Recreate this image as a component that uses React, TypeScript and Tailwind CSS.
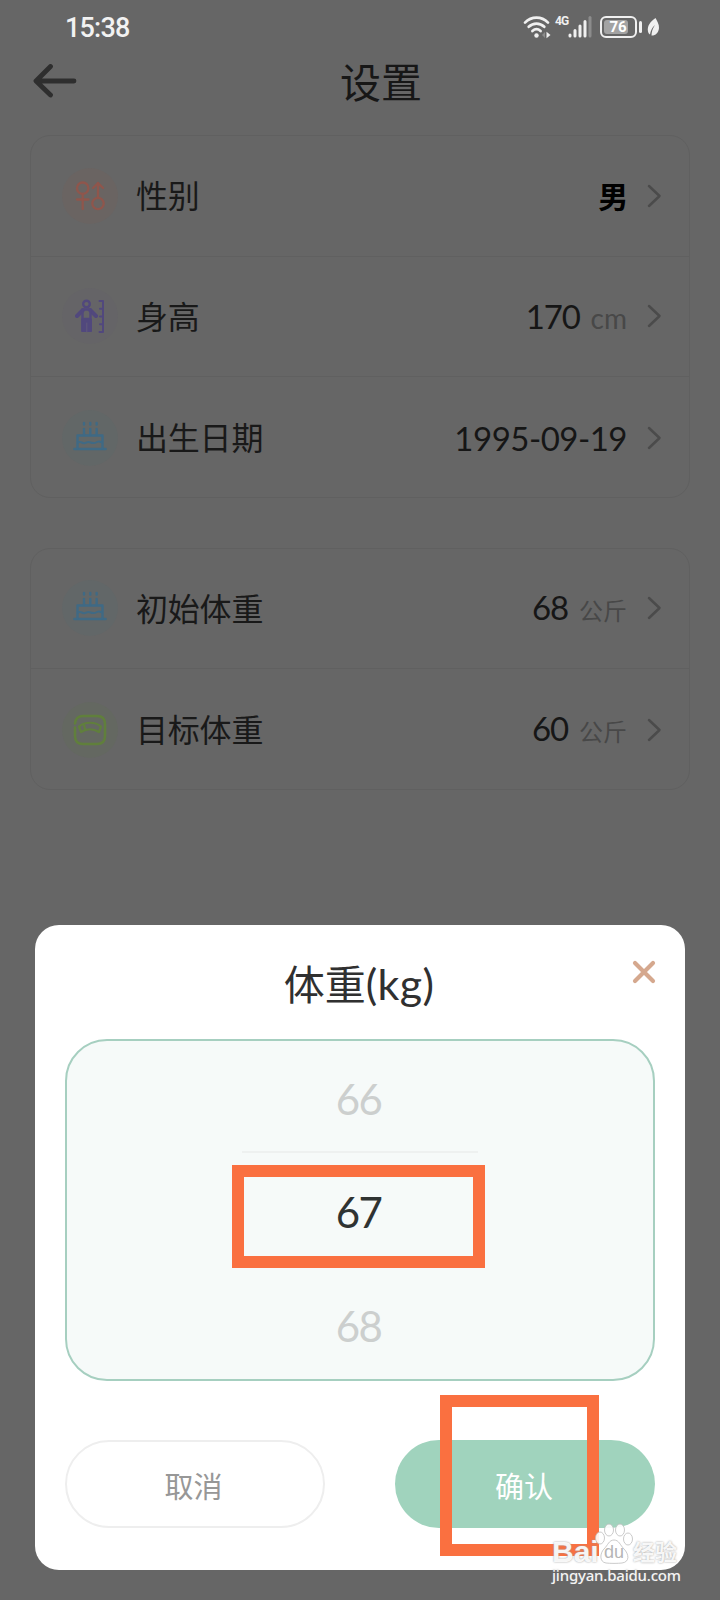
import { ReactNode } from "react";

interface RowProps {
    icon: ReactNode;
    tint: string;
    label: string;
    children: ReactNode;
}

function WifiIcon() {
    return (
        <svg width="28" height="24" viewBox="0 0 28 24" fill="none" stroke="#f0f0f0" strokeWidth="2.7" strokeLinecap="round">
            <path d="M2 7.6C8.5 1 18.5 1 25 7.6" />
            <path d="M5.7 11.8C10.2 7.5 16.8 7.5 21.3 11.8" />
            <path d="M9.4 16C11.9 13.8 15.1 13.8 17.6 16" />
            <circle cx="13.5" cy="20.5" r="2.2" fill="#f0f0f0" stroke="none" />
            <path d="M22 17v6l-3-3z" fill="#8c8c8c" stroke="none" />
            <path d="M23.5 16.8v6.4l4-3.2z" fill="#f0f0f0" stroke="none" />
        </svg>
    );
}

function SignalIcon() {
    return (
        <svg width="24" height="24" viewBox="0 0 24 24" fill="none" stroke="#f0f0f0" strokeWidth="3" strokeLinecap="round">
            <path d="M2 20v1M7 15.5V21M12 11v10M17 6.5V21" />
            <path d="M22 2.5V21" stroke="#8c8c8c" />
        </svg>
    );
}

function LeafIcon() {
    return (
        <svg width="13" height="20" viewBox="0 0 13 20">
            <path d="M8.5 1C3 5 0 9 1 14.5c.3 1.6 1.2 2.5 2 3C3.5 14 5 10.5 8 8 5.5 11.5 4.6 15 4.5 18.5c4 .2 7-2.5 7.5-7.5C12.3 7 10 4 8.5 1z" fill="#f0f0f0" />
        </svg>
    );
}

function BackIcon() {
    return (
        <svg width="46" height="34" viewBox="0 0 46 34" fill="none" stroke="#2e2e2e" strokeWidth="4.8" strokeLinecap="round" strokeLinejoin="round">
            <path d="M18.5 2.500L4 17l14.5 14M4.5 17H42" />
        </svg>
    );
}

function GenderIcon() {
    return (
        <svg width="30" height="30" viewBox="0 0 30 30" fill="none" stroke="#8f564c" strokeWidth="2.3" strokeLinecap="round" strokeLinejoin="round">
            <circle cx="7.7" cy="7.2" r="5.7" />
            <path d="M7.7 13v15M2 18.5h11.5" />
            <circle cx="23" cy="22.5" r="5.7" />
            <path d="M23 16.5V2M18 7l5-5 5 5" />
        </svg>
    );
}

function HeightIcon() {
    return (
        <svg width="30" height="34" viewBox="0 0 30 34" fill="none" stroke="#51487d" strokeWidth="2.4" strokeLinecap="round" strokeLinejoin="round">
            <circle cx="11.5" cy="5" r="3.3" />
            <path d="M8 11l-6 6M15 11l6 6" strokeWidth="4" />
            <path d="M7.5 10.5h8V20h-8z" />
            <path d="M7 20h9.5v12.5H7z" fill="#51487d" strokeWidth="1" />
            <path d="M11.8 24v9" stroke="#625b7c" strokeWidth="1" />
            <path d="M24.5 2H28v31h-3.5M28 9.7h-3M28 17.5h-3M28 25.2h-3" strokeWidth="2" />
        </svg>
    );
}

function CakeIcon() {
    return (
        <svg className="-mt-1" width="34" height="30" viewBox="0 0 34 30" fill="none" stroke="#3f6a85" strokeWidth="2.4" strokeLinecap="round" strokeLinejoin="round">
            <path d="M1.5 28h31" strokeWidth="2.6" />
            <path d="M4.5 27V14.5h25V27" />
            <path d="M5 21.5c3-2 4 1.5 7 .5s3-1.5 5.5-.5 4 1 6.5-.5 3.5 0 5 .5" strokeWidth="2" />
            <path d="M11 13.5V8M17.3 13.5V8M23.6 13.5V8M11 3.5V2M17.3 3.5V2M23.6 3.5V2" />
        </svg>
    );
}

function ScaleIcon() {
    return (
        <svg width="34" height="32" viewBox="0 0 34 32" fill="none" stroke="#607f3c" strokeWidth="2.5" strokeLinecap="round" strokeLinejoin="round">
            <path d="M2 9.5C2.5 4 5 2 10 2h14c5.5 0 8 2.5 8 8v12c0 5.5-2.5 8-8 8H10c-5.5 0-8-2.5-8-8v-8.500" />
            <path d="M6 12.5C12 7.5 22 7.5 28 12.5L26 18c-5.500-3.500-12.500-3.500-18 0zM11 10.500l1 5" strokeWidth="2.2" />
        </svg>
    );
}

function SettingRow({ icon, tint, label, children }: RowProps) {
    return (
        <div className="flex h-[120.5px] items-center pl-[31px] pr-[27px] last:h-[119.5px] last:pt-0.5">
            <div className={`flex size-14 items-center justify-center rounded-full ${tint}`}>{icon}</div>
            <span className="ml-[18px] pt-px text-[32px] leading-10 tracking-[-0.2px] text-[#191919]">{label}</span>
            <div className="ml-auto flex items-baseline pt-px text-[33px] leading-10 tracking-[-1.2px] text-[#161616]">{children}</div>
            <svg className="ml-5" width="15" height="24" viewBox="0 0 15 24" fill="none" stroke="#4b4b4b" strokeWidth="2.5" strokeLinecap="round" strokeLinejoin="round">
                <path d="M2 2l10.5 10L2 22" />
            </svg>
        </div>
    );
}

function SettingsScreen() {
    return (
        <div className="flex flex-col">
            <div className="flex h-[53px] items-center pl-[65px] pr-[60px]">
                <span className="pt-0.5 font-['Roboto'] text-[27px] font-medium leading-8 tracking-[-0.8px] text-[#f2f2f2]">15:38</span>
                <div className="ml-auto flex items-center">
                    <WifiIcon />
                    <span className="-mt-3 ml-1 w-[13px] font-['Roboto'] text-[12px] font-bold leading-3 tracking-[-1px] text-[#f0f0f0]">4G</span>
                    <SignalIcon />
                    <div className="ml-2 flex h-[22px] w-[37px] rounded-[6px] border-2 border-[#f0f0f0] p-[2px]">
                        <div className="flex w-6 items-center justify-center rounded-[3px] bg-[#a3a3a3] pl-1">
                            <span className="font-['Roboto'] text-[15px] font-bold leading-4 text-white">76</span>
                        </div>
                    </div>
                    <div className="ml-[2px] h-3 w-[3px] rounded-sm bg-[#f0f0f0]" />
                    <div className="ml-[5px]">
                        <LeafIcon />
                    </div>
                </div>
            </div>

            <div className="flex h-[82px] items-center pl-8 pb-[26px]">
                <BackIcon />
                <h1 className="ml-[262px] pt-[3px] text-[41px] leading-[50px] text-[#171717]">设置</h1>
            </div>

            <div className="mx-[30px] flex flex-col divide-y divide-[#606060] rounded-[20px] border border-[#606060]">
                <SettingRow icon={<GenderIcon />} tint="bg-[#6a6462]" label="性别">
                    <span className="text-[30px] font-bold text-black">男</span>
                </SettingRow>
                <SettingRow icon={<HeightIcon />} tint="bg-[#656467]" label="身高">
                    <span>170</span>
                    <span className="ml-[11px] text-[28px] tracking-normal text-[#484848]">cm</span>
                </SettingRow>
                <SettingRow icon={<CakeIcon />} tint="bg-[#626767]" label="出生日期">
                    <span className="tracking-[-0.5px]">1995-09-19</span>
                </SettingRow>
            </div>

            <div className="mx-[30px] mt-[50px] flex flex-col divide-y divide-[#606060] rounded-[20px] border border-[#606060]">
                <SettingRow icon={<CakeIcon />} tint="bg-[#626768]" label="初始体重">
                    <span>68</span>
                    <span className="ml-[11px] text-[24px] tracking-normal text-[#484848]">公斤</span>
                </SettingRow>
                <SettingRow icon={<ScaleIcon />} tint="bg-[#646861]" label="目标体重">
                    <span>60</span>
                    <span className="ml-[11px] text-[24px] tracking-normal text-[#484848]">公斤</span>
                </SettingRow>
            </div>
        </div>
    );
}

function Watermark() {
    return (
        <div className="absolute bottom-[15px] right-[36px] flex w-[132px] flex-col">
            <div className="flex h-[42px] items-end text-white/90 [text-shadow:0_0_2px_#999]">
                <span className="w-[43px] font-['Liberation_Sans'] text-[30px] font-bold leading-[26px]">Bai</span>
                <div className="relative h-[42px] w-[38px]">
                    <svg width="38" height="42" viewBox="0 0 38 42" fill="#ffffff" fillOpacity="0.9" stroke="#bdbdbd" strokeWidth="0.8">
                        <ellipse cx="5" cy="15" rx="4.5" ry="6" />
                        <ellipse cx="14" cy="7" rx="4.5" ry="6" />
                        <ellipse cx="25" cy="7" rx="4.5" ry="6" />
                        <ellipse cx="33" cy="16" rx="4.5" ry="6" />
                        <path d="M19 17c-5 0-6 5-10 9-4 4-5 13 2 14 4 .5 12 .5 16 0 8-1 7-9 2-14-4-4-5-9-10-9z" />
                    </svg>
                    <span className="absolute left-[9px] top-[19px] font-['Liberation_Sans'] text-[18px] leading-5 text-[#b5b5b5] [text-shadow:none]">du</span>
                </div>
                <span className="text-[22px] font-bold leading-[26px]">经验</span>
            </div>
            <span className="font-['Noto_Sans'] text-[15px] font-medium leading-[20px] tracking-[-0.2px] text-[#f4f4f4] [text-shadow:0_0_2px_#777]">jingyan.baidu.com</span>
        </div>
    );
}

function WeightDialog() {
    return (
        <div className="absolute inset-0 flex items-end justify-center pb-[30px]">
            <div className="relative flex h-[645px] w-[650px] flex-col rounded-[24px] bg-white px-[30px]">
                <h2 className="flex h-[114px] items-baseline justify-center pr-0.5 pt-[34px] text-[41px] leading-[50px] text-[#303030]">
                    体重<span className="text-[43px] tracking-[0.3px]">(kg)</span>
                </h2>
                <button className="absolute right-[29px] top-[35px]">
                    <svg width="24" height="24" viewBox="0 0 24 24" fill="none" stroke="#d5a88e" strokeWidth="4.2" strokeLinecap="round">
                        <path d="M3 3l18 18M21 3L3 21" />
                    </svg>
                </button>

                <div className="flex h-[342px] flex-col items-center rounded-[42px] border-2 border-[#a6cfc0] bg-[#f6faf9] text-[42px] leading-[50px] tracking-[-1.5px] text-[#cccfce]">
                    <div className="flex h-[112px] w-[236px] items-center justify-center border-b-2 border-[#eef1f0] pr-[3px] pt-[5px]">66</div>
                    <div className="flex h-[114px] items-center pr-[3px] pt-1 text-[#2f3332]">67</div>
                    <div className="flex h-[112px] items-center pr-[3px] pt-[5px]">68</div>
                </div>

                <div className="mt-[59px] flex justify-between text-[29px] leading-10">
                    <button className="h-[88px] w-[260px] rounded-full border-2 border-[#eeeeee] pr-[3px] pt-[5px] text-[#979797]">取消</button>
                    <button className="h-[88px] w-[260px] rounded-full bg-[#a0d3bd] pr-0.5 pt-[5px] text-white">确认</button>
                </div>

                {/* step markers */}
                <div className="absolute left-[197px] top-[240px] h-[103px] w-[253px] border-[12px] border-[#fa7040]" />
                <div className="absolute left-[405px] top-[470px] h-[161px] w-[159px] border-[12px] border-[#fa7040]" />
            </div>
        </div>
    );
}

export default function App() {
    return (
        <div className="relative h-[1600px] w-[720px] overflow-hidden bg-[#666666] font-['Lato','Noto_Sans_CJK_SC',sans-serif]">
            <SettingsScreen />
            <WeightDialog />
            <Watermark />
        </div>
    );
}
